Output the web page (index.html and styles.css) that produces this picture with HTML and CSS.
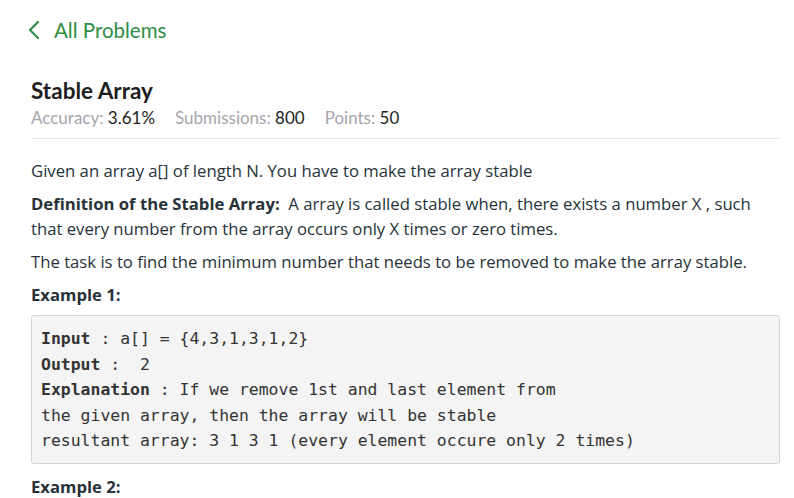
FILE: index.html
```html
<!DOCTYPE html>
<html>
<head>
<meta charset="utf-8">
<link rel="stylesheet" href="styles.css">
</head>
<body>
<div class="page">
  <a class="back" href="#">
    <svg class="chev" width="14" height="20" viewBox="0 0 14 20"><path d="M11 2 L3 10 L11 18" fill="none" stroke="#2f8d46" stroke-width="2.2" stroke-linecap="round" stroke-linejoin="round"/></svg>
    <span>All Problems</span>
  </a>
  <div class="head">
    <h1 class="title">Stable Array</h1>
    <div class="meta">
      <span class="m">Accuracy: <b>3.61%</b></span>
      <span class="m">Submissions: <b>800</b></span>
      <span class="m">Points: <b>50</b></span>
    </div>
  </div>
  <div class="problem">
    <p>Given an array a[] of length N. You have to make the array stable</p>
    <p><strong>Definition of the Stable Array:</strong>&nbsp; A array is called stable when, there exists a number X , such that every number from the array occurs only X times or zero times.</p>
    <p>The task is to find the minimum number that needs to be removed to make the array stable.</p>
    <p><strong>Example 1:</strong></p>
    <pre class="code"><b>Input</b> : a[] = {4,3,1,3,1,2}
<b>Output</b> :  2
<b>Explanation</b> : If we remove 1st and last element from
the given array, then the array will be stable
resultant array: 3 1 3 1 (every element occure only 2 times)</pre>
    <p><strong>Example 2:</strong></p>
  </div>
</div>
</body>
</html>
```

FILE: styles.css
```css
html, body { margin: 0; padding: 0; background: #fff; }
body { font-family: "Open Sans", sans-serif; color: #273239; }
.page { padding: 17px 14px 0 31px; }
.back { display: flex; align-items: center; gap: 13px; text-decoration: none; color: #2f8d46; font-family: "Lato", sans-serif; font-size: 20.5px; margin-left: -4px; height: 26px; }
.chev { display: block; }
.head { margin-top: 35px; padding-bottom: 9px; border-bottom: 1px solid #e7e7e7; }
.title { margin: 0; font-family: "Lato", sans-serif; font-weight: 700; font-size: 22.5px; line-height: 26px; color: #1e1e1e; }
.meta { display: flex; gap: 20px; margin-top: 3px; font-family: "Lato", sans-serif; font-size: 17px; color: #a5a5ac; line-height: 22px; }
.meta b { font-weight: 400; color: #1e1e1e; }
.problem { padding-top: 19px; font-size: 16.7px; line-height: 25px; }
.problem p { margin: 0 0 8px 0; }
.problem strong { font-weight: 700; }
.code { margin: 8px 0 10px 0; padding: 10px 9px 9px 9px; background: #f4f4f4; border: 1px solid #d4d4d4; border-radius: 3px; font-family: "DejaVu Sans Mono", monospace; font-size: 16.45px; line-height: 25.5px; color: #333; }
.code b { font-weight: 700; }
```
